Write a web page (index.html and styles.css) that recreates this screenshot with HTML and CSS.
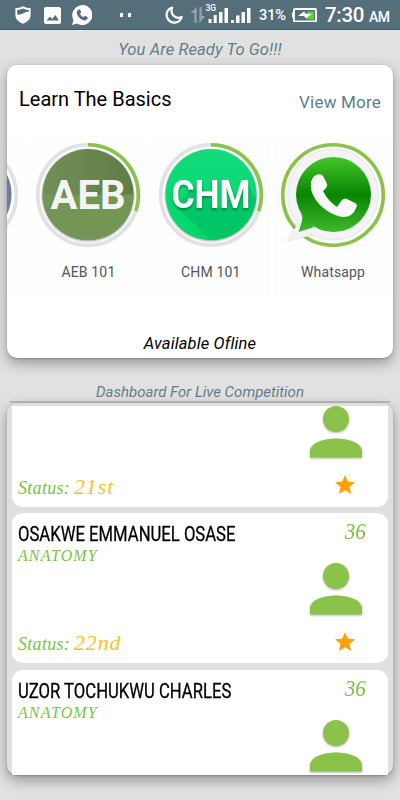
FILE: index.html
```html
<!DOCTYPE html>
<html lang="en">
<head>
<meta charset="utf-8">
<title>Learn The Basics</title>
<link rel="stylesheet" href="styles.css">
</head>
<body>
<svg class="defs" width="0" height="0">
  <defs>
    <linearGradient id="wa" gradientUnits="userSpaceOnUse" x1="0" y1="15" x2="0" y2="90"><stop offset="0" stop-color="#45c52b"/><stop offset=".5" stop-color="#078600"/><stop offset="1" stop-color="#3fb82c"/></linearGradient>
    <linearGradient id="olive" x1="0" y1="0" x2="1" y2="0"><stop offset="0" stop-color="#728f57"/><stop offset="1" stop-color="#617d46"/></linearGradient>
    <linearGradient id="mint" x1="0" y1="0" x2="0" y2="1"><stop offset="0" stop-color="#14db7c"/><stop offset="1" stop-color="#00d66c"/></linearGradient>
    <clipPath id="disc"><circle cx="53" cy="52.500" r="45.500"/></clipPath>
    <symbol id="person" viewBox="0 0 54 54"><circle cx="27" cy="13" r="13"/><path d="M1 51.500V45C1 37 15 32.500 27 32.500S53 37 53 45v6.500z"/></symbol>
    <symbol id="star" viewBox="0 0 20 20"><path d="M10 0l2.700 6.600 7.300.6-5.500 4.700 1.700 7.100-6.200-3.800L3.800 19l1.700-7.100L0 7.200l7.300-.6z"/></symbol>
  </defs>
</svg>

<header class="statusbar">
  <svg class="icon shield" viewBox="0 0 16 18"><path d="M8 .2C5.600 1.600 3 2 .4 2v7c0 4.200 3.300 7 7.600 8.800C12.300 16 15.600 13.200 15.600 9V2C13 2 10.400 1.600 8 .2z" fill="#fff"/><path d="M2.200 3.900C4.400 3.800 6.400 3.400 8 2.500c1.600.9 3.600 1.300 5.800 1.400v2C9 5.500 7.500 9.500 2.200 8.500z" fill="#546e7a"/></svg>
  <svg class="icon photo" viewBox="0 0 17 17"><rect width="17" height="17" rx="2" fill="#fff"/><path d="M2.500 13.500l3.300-4 2.400 2.500L11.500 8l3.300 5.500z" fill="#546e7a"/></svg>
  <svg class="icon chat" viewBox="0 0 20 20"><path d="M1.600 5.300A10 10 0 1 1 5.200 18.600L0 20l1.500-5A10 10 0 0 1 1.600 5.300z" fill="#fff"/><path d="M6.600 4.500l1.500 0 1.100 3-1.200 1.400q1.200 2.200 3.400 3.300l1.300-1.400 2.900 1.300v1.500q-.8 2-3 1.900C8.500 15 5 11 4.800 7.800q0-2 1.800-3.300z" fill="#546e7a"/></svg>
  <svg class="icon dots" viewBox="0 0 11 4"><path d="M0 0h3v4H0zM8 0h3v4H8z" fill="#fff"/></svg>
  <svg class="icon moon" viewBox="0 0 18 18"><path d="M7.200 1.500A7.700 7.700 0 1 0 16.700 11C10.500 13.700 4.500 8 7.200 1.500z" fill="none" stroke="#fff" stroke-width="2.200" stroke-linejoin="round"/></svg>
  <svg class="icon signal" viewBox="0 0 60 20"><path d="M4.500 20V6M9.500 4v10" fill="none" stroke="#93a4ac" stroke-width="2.200"/><path d="M5.600 4v6H-.5zM8.400 13h6l-6 7z" fill="#93a4ac"/><g fill="#fff"><path d="M17.500 16h3v4h-3zM22.700 12h3v8h-3zM28 9h3.500v11H28zM33.500 5H37v15h-3.500zM40 17h3v3h-3zM45 12.500h3.500V20H45zM50.500 9H54v11h-3.500zM56 5h3.500v15H56z"/></g><text x="14.500" y="8" font-size="8.500" font-weight="500" fill="#fff">3G</text></svg>
  <span class="percent">31%</span>
  <svg class="icon battery" viewBox="0 0 25 14"><rect x="2" y="1" width="22" height="12.500" rx="1" fill="none" stroke="#fff" stroke-width="1.900"/><path d="M0 4.500h2v5H0z" fill="#fff"/><path d="M15 3.500h7v8h-7z" fill="#57d72c"/><path d="M6 8l6-4.500 2 2.500 6-.5-6 5-2-2.500z" fill="#fff"/></svg>
  <span class="clock">7:30</span><span class="ampm">AM</span>
</header>

<main>
  <h2 class="caption ready"><span>You Are Ready To Go!!!</span></h2>
  <section class="basics">
    <div class="basics-head"><h1>Learn The Basics</h1><a>View More</a></div>
    <div class="courses">
      <div class="course">
        <svg class="badge" viewBox="0 0 106 106"><circle class="track" cx="53" cy="53" r="50.250"/><circle cx="53" cy="52.500" r="45.500" fill="#6b7ba5"/></svg>
      </div>
      <div class="course">
        <svg class="badge" viewBox="0 0 106 106"><circle class="track" cx="53" cy="53" r="50.250"/><path class="arc" d="M53 2.750A50.250 50.250 0 0 1 100.800 69"/><g class="disc"><circle cx="53" cy="52.500" r="45.500" fill="url(#olive)"/><path d="M7.500 52.500h91a45.500 45.500 0 0 1-91 0z" fill="#739655"/></g><text class="mono soft" x="53" y="67" textLength="75" lengthAdjust="spacingAndGlyphs">AEB</text></svg>
        <span>AEB 101</span>
      </div>
      <div class="course">
        <svg class="badge" viewBox="0 0 106 106"><circle class="track" cx="53" cy="53" r="50.250"/><path class="arc" d="M53 2.750A50.250 50.250 0 0 1 100.800 69"/><circle class="disc" cx="53" cy="52.500" r="45.500" fill="url(#mint)"/><path d="M17 63L70 116 110 80 90 42 58 68 42 40z" fill="#00bd62" opacity=".65" clip-path="url(#disc)"/><text class="mono chm" x="53" y="66" textLength="79" lengthAdjust="spacingAndGlyphs">CHM</text></svg>
        <span>CHM 101</span>
      </div>
      <div class="course">
        <svg class="badge" viewBox="0 0 106 106"><circle class="arc" cx="53" cy="53" r="50.250"/><path d="M12 71Q20 78 17 83L7 99l27-6z" fill="#f4f4f4" stroke="#ccc" stroke-width=".6" stroke-dasharray="2 1"/><circle cx="53" cy="52.500" r="45.300" fill="#f4f4f4" stroke="#c8c8c8" stroke-width=".6" stroke-dasharray="2 1"/><path d="M17 68Q24 74 22 79l-3.500 11L34 85z" fill="url(#wa)"/><circle cx="53.500" cy="52.500" r="37.500" fill="url(#wa)"/><path d="M35 33.500q6-3.500 9 2l3 6.500q1 3-4 7 5 10 14 16l5-7q2-2.500 5-1l8 4q3 1.500 1 5-3 9-13 9C46 73 29 55 31 42q0-5 4-8.500z" fill="#f8f8f8"/></svg>
        <span>Whatsapp</span>
      </div>
    </div>
    <p class="offline"><span>Available Ofline</span></p>
  </section>

  <h2 class="caption live"><span>Dashboard For Live Competition</span></h2>
  <section class="board">
    <article class="player first">
      <div class="info"><p class="status">Status: <b>21st</b></p></div>
      <div class="side"><svg class="person"><use href="#person"/></svg><svg class="star"><use href="#star"/></svg></div>
    </article>
    <article class="player">
      <div class="info"><h3><span>OSAKWE EMMANUEL OSASE</span></h3><p class="dept">ANATOMY</p><p class="status">Status: <b>22nd</b></p></div>
      <div class="side"><span class="score">36</span><svg class="person"><use href="#person"/></svg><svg class="star"><use href="#star"/></svg></div>
    </article>
    <article class="player last">
      <div class="info"><h3><span>UZOR TOCHUKWU CHARLES</span></h3><p class="dept">ANATOMY</p></div>
      <div class="side"><span class="score">36</span><svg class="person"><use href="#person"/></svg></div>
    </article>
  </section>
</main>
</body>
</html>
```

FILE: styles.css
```css
* { box-sizing: border-box; }
body { margin: 0; width: 400px; height: 800px; overflow: hidden; background: #e1e1e1; font-family: Roboto, sans-serif; }
h1, h2, h3, p { margin: 0; font-weight: 400; white-space: nowrap; }
svg { display: block; flex: none; }
.defs { height: 0; }

.statusbar { display: flex; align-items: flex-start; height: 30px; background: #546e7a; border-bottom: 1px solid #415d69; color: #fff; }
.shield { width: 16px; height: 18px; margin: 6px 0 0 15px; }
.photo { width: 17px; height: 17px; margin: 7px 0 0 13px; }
.chat { width: 20px; height: 20px; margin: 5px 0 0 11px; }
.dots { width: 11px; height: 4px; margin: 13px 0 0 28px; }
.moon { width: 18px; height: 18px; margin: 6px 0 0 34px; }
.signal { width: 60px; height: 20px; margin: 3px 0 0 8px; overflow: visible; }
.percent { width: 27px; margin: 7px 0 0 8px; font-size: 14.500px; line-height: 18px; font-weight: 500; letter-spacing: -.1px; }
.battery { width: 25px; height: 14px; margin: 8px 0 0 6px; }
.clock { width: 40px; margin: 3px 0 0 8px; font-size: 20.500px; line-height: 25px; font-weight: 500; letter-spacing: -.3px; }
.ampm { margin: 8px 0 0 4px; font-size: 14px; line-height: 19px; font-weight: 500; letter-spacing: -.6px; }

.caption { text-align: center; font-style: italic; color: #607d8b; }
.caption span, .offline span { display: inline-block; }
.ready { height: 35px; font-size: 16.500px; line-height: 39px; letter-spacing: .12px; }
.live { height: 45px; margin: 0 10px; font-size: 15px; line-height: 69px; border-bottom: 2px solid #bbb; }

.basics { display: flex; flex-direction: column; width: 386px; height: 293px; margin: 0 7px; background: #fff; border-radius: 10px; box-shadow: 0 5px 14px rgba(0,0,0,.34), 0 1px 2px rgba(0,0,0,.18); overflow: hidden; }
.basics-head { display: flex; justify-content: space-between; height: 76px; padding: 0 12px 0 12px; }
.basics-head h1 { font-size: 20px; line-height: 68px; color: #000; }
.basics-head a { font-size: 17px; line-height: 75px; letter-spacing: .2px; color: #607d8b; }
.courses { display: flex; gap: 3px; height: 157px; margin-left: -100.500px; }
.course { display: flex; flex: none; flex-direction: column; align-items: center; width: 119.300px; background: #fdfdfd; }
.course span { margin-top: 14px; font-size: 14px; line-height: 20px; letter-spacing: .15px; color: #555; }
.badge { width: 106px; height: 106px; margin-top: 1px; overflow: visible; }
.track, .arc { fill: none; stroke-width: 3.700px; }
.track { stroke: #e1e1e1; }
.arc { stroke: #8bc34a; }
.disc { filter: drop-shadow(0 1px 1px rgba(0,0,0,.4)); }
.mono { font-size: 41px; font-weight: 700; text-anchor: middle; fill: #fff; }
.soft { fill: #f4f4f4; }
.chm { font-size: 38px; filter: drop-shadow(0 2px 1px rgba(0,0,0,.3)); }
.offline { text-align: center; font-size: 16.500px; line-height: 20px; margin-top: 36px; letter-spacing: .15px; font-style: italic; color: #000; }

.board { width: 386px; height: 372px; padding: 3px 5px 0; border-radius: 10px; margin: 0 7px; background: #e0e0e0; box-shadow: 0 5px 14px rgba(0,0,0,.36), 0 1px 2px rgba(0,0,0,.18); }
.player { display: flex; justify-content: space-between; height: 150px; margin-bottom: 6.500px; padding: 0 23px 0 6px; background: #fff; border-radius: 11px; overflow: hidden; }
.first { height: 100.500px; border-radius: 0 0 11px 11px; }
.last { height: 105.500px; margin: 0; border-radius: 11px 11px 0 0; }
.info { display: flex; flex-direction: column; }
h3 { height: 31px; font-size: 20px; line-height: 42px; color: #000; }
h3 span { display: inline-block; transform-origin: left; transform: scaleX(.833); -webkit-text-stroke: .3px #000; }
.dept, .status { font-family: "Liberation Serif", serif; font-style: italic; color: #7cc242; }
.dept { font-size: 16px; line-height: 24px; letter-spacing: 1.100px; }
.status { margin-top: auto; height: 35px; font-size: 18px; line-height: 29px; letter-spacing: .3px; word-spacing: -1px; }
.status b { font-size: 22px; font-weight: 400; color: #fbc02d; letter-spacing: .9px; }
.side { display: flex; flex-direction: column; align-items: center; width: 58px; }
.score { height: 50px; margin-left: 39px; font-family: "Liberation Serif", serif; font-style: italic; font-size: 22.500px; line-height: 38px; color: #7cc242; transform: scaleX(.94); }
.person { width: 54px; height: 54px; fill: #8bc34a; filter: drop-shadow(0 1px 1px rgba(0,0,0,.3)); }
.star { width: 20px; height: 20px; margin: 15px 0 0 17px; fill: #ffa000; }
```
